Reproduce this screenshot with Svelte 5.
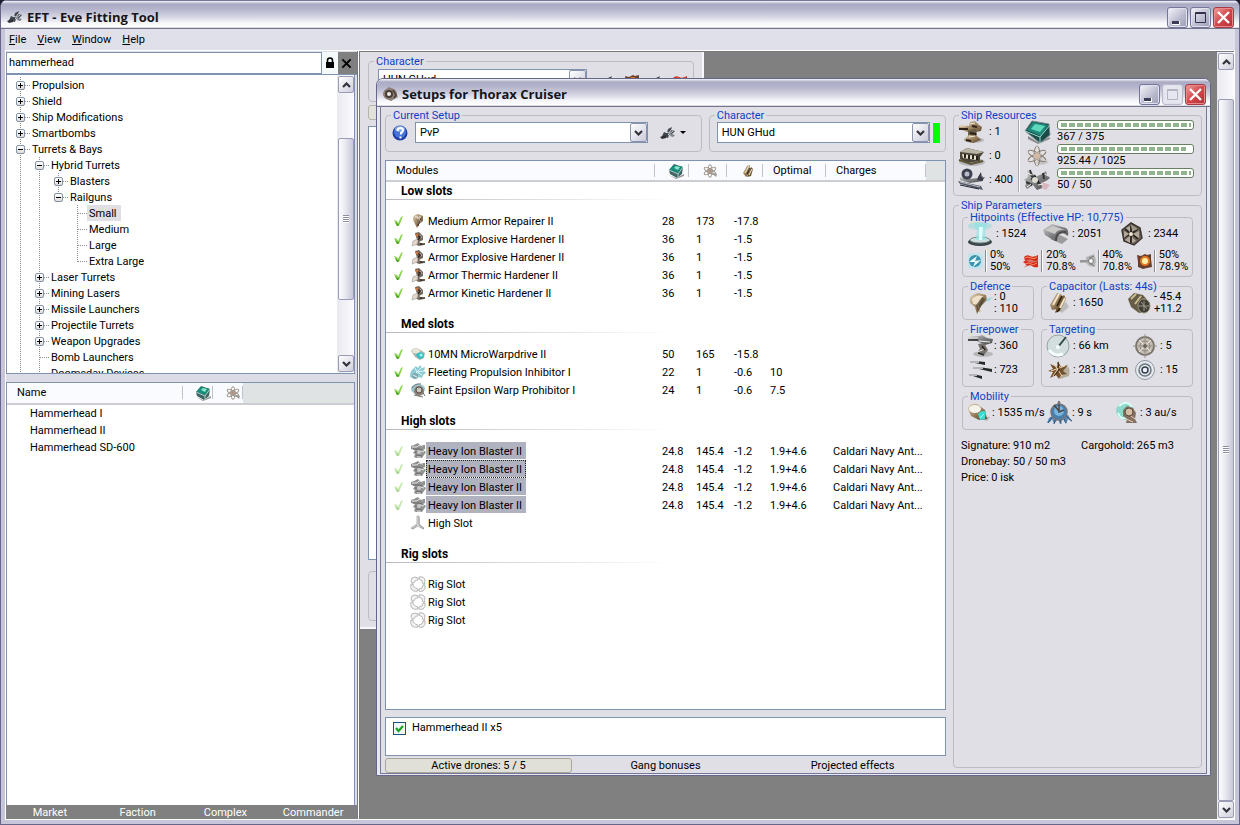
<script>
  const tree = [
    { t: 'Propulsion', b: '+', g: [] },
    { t: 'Shield', b: '+', g: [] },
    { t: 'Ship Modifications', b: '+', g: [] },
    { t: 'Smartbombs', b: '+', g: [] },
    { t: 'Turrets & Bays', b: '-', g: [] },
    { t: 'Hybrid Turrets', b: '-', g: [1] },
    { t: 'Blasters', b: '+', g: [1, 1] },
    { t: 'Railguns', b: '-', g: [1, 1], last: true },
    { t: 'Small', g: [1, 1, 0], sel: true },
    { t: 'Medium', g: [1, 1, 0] },
    { t: 'Large', g: [1, 1, 0] },
    { t: 'Extra Large', g: [1, 1, 0], last: true },
    { t: 'Laser Turrets', b: '+', g: [1] },
    { t: 'Mining Lasers', b: '+', g: [1] },
    { t: 'Missile Launchers', b: '+', g: [1] },
    { t: 'Projectile Turrets', b: '+', g: [1] },
    { t: 'Weapon Upgrades', b: '+', g: [1] },
    { t: 'Bomb Launchers', g: [1] },
    { t: 'Doomsday Devices', g: [1] }
  ];

  const groups = [
    {
      name: 'Low slots',
      rows: [
        { i: 'repair', n: 'Medium Armor Repairer II', v: ['28', '173', '-17.8', '', ''] },
        { i: 'hardener', n: 'Armor Explosive Hardener II', v: ['36', '1', '-1.5', '', ''] },
        { i: 'hardener', n: 'Armor Explosive Hardener II', v: ['36', '1', '-1.5', '', ''] },
        { i: 'hardener', n: 'Armor Thermic Hardener II', v: ['36', '1', '-1.5', '', ''] },
        { i: 'hardener', n: 'Armor Kinetic Hardener II', v: ['36', '1', '-1.5', '', ''] }
      ]
    },
    {
      name: 'Med slots',
      rows: [
        { i: 'mwd', n: '10MN MicroWarpdrive II', v: ['50', '165', '-15.8', '', ''] },
        { i: 'web', n: 'Fleeting Propulsion Inhibitor I', v: ['22', '1', '-0.6', '10', ''] },
        { i: 'scram', n: 'Faint Epsilon Warp Prohibitor I', v: ['24', '1', '-0.6', '7.5', ''] }
      ]
    },
    {
      name: 'High slots',
      rows: [
        ...[0, 1, 2, 3].map((k) => ({
          i: 'blaster',
          n: 'Heavy Ion Blaster II',
          v: ['24.8', '145.4', '-1.2', '1.9+4.6', 'Caldari Navy Ant...'],
          sel: true,
          focus: k === 1
        })),
        { i: 'high', n: 'High Slot', v: ['', '', '', '', ''], empty: true }
      ]
    },
    {
      name: 'Rig slots',
      rows: [0, 1, 2].map(() => ({ i: 'rig', n: 'Rig Slot', v: ['', '', '', '', ''], empty: true }))
    }
  ];

  const hardpoints = [
    ['turret', ': 1'],
    ['launcher', ': 0'],
    ['calib', ': 400']
  ];
  const resources = [
    ['cpu', '367 / 375', 100],
    ['atom', '925.44 / 1025', 96],
    ['drone', '50 / 50', 100]
  ];
  const resists = [
    ['em', '0%', '50%'],
    ['thermal', '20%', '70.8%'],
    ['kinetic', '40%', '70.8%'],
    ['explosive', '50%', '78.9%']
  ];

  let search = $state('hammerhead');
  let drones = $state(true);

  // Wide icons use a 28x24 canvas, list icons a 16x16 one.
  const big = {
    turret: '<ellipse cx="17" cy="20" rx="10" ry="3" fill="#777" opacity=".4"/><path d="M1 7l3-2 8 1 1-4 5-1 4 4 3 2-1 4-5 1-1 4-6 1-1-5-9-3z" fill="url(#bronze)"/><path d="M11 10l8-1 1 6-3 3-6-2z" fill="#6a5d48"/><path d="M7 19l5-4 8 1 4 4-8 3-8-2z" fill="url(#bronze)"/><path d="M2 9h9M15 6l5 1M13 13l6 1M9 20l5 1" stroke="#2b2116" stroke-width="2"/><path d="M13 4l5-1M3 6h6M12 17l6-1" stroke="#efe4cc"/>',
    launcher: '<ellipse cx="15" cy="18" rx="13" ry="4" fill="#777" opacity=".4"/><path d="M3 8l7-4 17 4-4 5v4l-13 2-7-4z" fill="#4c463a"/><path d="M3 8l7-4 17 4-7 2z" fill="#b9b5a4"/><path d="M5 10l15 2v4l-14-2z" fill="#e8e4d2"/><path d="M8 10v4M12 11v4M16 11v4M20 12v4" stroke="#272219" stroke-width="2"/><path d="M2 16l12 4 12-3" stroke="#5b5334" stroke-width="2" fill="none"/>',
    calib: '<path d="M1 13l23 5 2 4-23-6z" fill="#555865"/><path d="M3 9l8 2 11-1 4-2v5l-13 2-10-3z" fill="url(#steel)"/><circle cx="10" cy="6" r="4" fill="#b9bbc8" stroke="#3d4050" stroke-width="3"/><path d="M21 9l3-5 1 6 3-1-3 4-5-1z" fill="#3a3b49"/><path d="M3 14l20 5" stroke="#babdc9"/><path d="M3 17l19 4" stroke="#24252f"/>',
    cpu: '<path d="M5 16l10 6 12-5v2l-12 5-10-5z" fill="#555" opacity=".6"/><path d="M2 11L9 1l17 3 1 11-10 8z" fill="#184b49" stroke="#7b8a89"/><path d="M4 10l6-8 15 3-7 11z" fill="#1f8a7c"/><path d="M8 9l4-5 10 2-5 6z" fill="#5fd9bb"/><path d="M2 11l15 6 10-12M17 17v6" stroke="#9dd9cc" fill="none"/>',
    atom: '<path d="M12 19q8 4 14-1-5-2-7-5" fill="#999" opacity=".4"/><g fill="none" stroke="#8a7e72"><ellipse cx="14" cy="12" rx="3" ry="10"/><ellipse cx="14" cy="12" rx="3" ry="10" transform="rotate(60 14 12)"/><ellipse cx="14" cy="12" rx="3" ry="10" transform="rotate(120 14 12)"/></g><path d="M14 2v20M5 8l18 9M5 17l18-10" stroke="#eee5d8" stroke-width=".7"/><circle cx="14" cy="12" r="3" fill="#d3b8a2"/>',
    drone: '<path d="M11 17l12 5 4-5-8-3z" fill="#c88" opacity=".45"/><path d="M4 2l5 2 3 5 7-3 4-3 1 4 3 3-4 3-5 2 1 5-5 2-4-5-6 4-2-3 2-4-3-2 4-3z" fill="url(#steel)"/><path d="M7 2l2 7M12 7l-3 4 9 6M20 5l1 6M3 14l6 3" stroke="#333630" stroke-width="2"/><circle cx="12" cy="12" r="3" fill="#dedcd2"/><path d="M4 5l5 2M15 17l5-1M22 6l3 2M4 19l4-3" stroke="#f4f4ee"/>',
    shield: '<ellipse cx="14" cy="20" rx="12" ry="4" fill="#3b4649"/><ellipse cx="14" cy="18" rx="10" ry="3" fill="#cddfe0" stroke="#78888a"/><path d="M7 1h15l-3 6 1 11H10l1-11z" fill="#91e7e7" opacity=".65"/><ellipse cx="14" cy="4" rx="12" ry="4" fill="#8cdcdc" opacity=".5"/><path d="M13 5h4l-1 13h-3z" fill="#dcffff"/>',
    armor: '<path d="M8 17l12 5 6-5-8-4z" fill="#555" opacity=".5"/><path d="M1 8l9-6 14 4q3 2 2 8l-3-2q-3-2-7 0l-3 7L3 13z" fill="url(#steel)"/><path d="M3 8l8-4 12 4q-8-1-10 4z" fill="#c9cac8"/><path d="M14 19q0-10 10-9" stroke="#4a4b4b" stroke-width="2" fill="none"/>',
    hull: '<path d="M13 1l9 5 2 10-8 7-10-4-2-11z" fill="#6c6459" stroke="#3d362f" stroke-width="1.500"/><path d="M13 4v8l7-5M14 12l6 5M13 12v9M12 12l-6 4M13 12L7 7" stroke="#211c17" stroke-width="1.500"/><path d="M13 3l7 4-6 3zM6 9l5 3-5 4zM21 9v7l-6-4zM7 18l5-4v7zM14 15l4 4-4 2zM8 6l4-2v6z" fill="#c6bcae" opacity=".8"/><circle cx="13" cy="12" r="2" fill="#f1e7d5"/>',
    defence: '<path d="M4 12q-2-8 8-10l8 2 1 5-6 6-4 8-2-7z" fill="url(#bronze)"/><path d="M6 8q4-5 11-3l-5 9-5-1z" fill="#eee1c7"/><path d="M20 8l7-2-5 5z" fill="#9bd8dd"/><path d="M12 14l2 7" stroke="#c9b393" stroke-width="1.500"/><path d="M10 14l6-8 3 2-7 13z" fill="#3c3326" opacity=".6"/>',
    capacitor: '<path d="M9 17l8 5 7-6-3-5z" fill="#888" opacity=".4"/><path d="M5 14L12 2l5 2-5 14-5 1z" fill="url(#bronze)"/><path d="M14 8l5-4 2 4-6 12-5 2z" fill="#765d37"/><path d="M12 15l5-10M12 21l3-4" stroke="#2b2012" stroke-width="1.500"/><path d="M8 14l6-11M15 17l5-10" stroke="#f2e3c6" stroke-width="2"/>',
    recharge: '<path d="M2 8l6-6 9 2 7 8-3 8-8 2-8-6z" fill="#665d48"/><path d="M5 8l5-5M9 13l6-8M13 17l6-9" stroke="#c9bb92" stroke-width="2"/><ellipse cx="18" cy="15" rx="6" ry="7" fill="#3f3e34" stroke="#9c947e"/><path d="M18 10v10M13 15h10M15 11l6 7" stroke="#a09b8a"/>',
    firepower: '<ellipse cx="17" cy="20" rx="10" ry="3" fill="#777" opacity=".4"/><path d="M1 3l12-1 3-1 5 3 6 1-1 4-7 2-8-4-9-1z" fill="url(#steel)"/><path d="M12 10l6-1 4 7-4 5-7-3 3-3z" fill="#77716c"/><path d="M1 4h11M13 7l11 1M11 18l8-3" stroke="#eee"/><path d="M2 6h10M16 12l3 4M12 19l6 2" stroke="#262626" stroke-width="1.500"/>',
    volley: '<path d="M9 3l10 1v3L9 5zM13 9l13 2v3l-13-3zM7 16l9 2v3l-9-3z" fill="#222b29"/><path d="M4 4h9M7 10h10M3 17h8" stroke="#b4b6ba" stroke-width="2"/>',
    range: '<circle cx="13" cy="12" r="11" fill="#d2dddd" stroke="#93a5a4"/><path d="M4 16q5 7 14 4" stroke="#f7ffff" stroke-width="3" fill="none"/><path d="M13 13L21 3" stroke="#2f4945" stroke-width="2"/><circle cx="13" cy="13" r="2" fill="#f3ffff"/>',
    target: '<circle cx="13" cy="12" r="9" fill="#c5beb5" stroke="#7c756e" stroke-width="2"/><circle cx="13" cy="12" r="5" fill="none" stroke="#8a837c"/><path d="M13 0v24M1 12h24" stroke="#9a938b"/><path d="M7 6l12 12M19 6L7 18" stroke="#eee4d7"/><circle cx="13" cy="12" r="2" fill="#6a625a"/>',
    scan: '<path d="M16 10q11-5 8 8l-9 3z" fill="#b5ac9b"/><path d="M5 6l7 3 1-6 3 6 7-2-5 6 4 3-6 1-2 4-3-4-6 3 3-6-5-1 5-2z" fill="#76512e"/><path d="M6 13l14-5M9 6l8 12M8 18l7-10" stroke="#eed6ad"/><path d="M13 4l1 8-5 6" stroke="#3a2814" fill="none"/>',
    sig: '<circle cx="13" cy="12" r="9.500" fill="#e5e9ed" stroke="#8d97a1"/><circle cx="13" cy="12" r="6" fill="none" stroke="#6b7682" stroke-width="1.500"/><circle cx="13" cy="12" r="3" fill="#eef" stroke="#39424c" stroke-width="1.500"/>',
    speed: '<path d="M9 16l12 4 3-4z" fill="#888" opacity=".5"/><path d="M2 8q1-6 9-5l8 6 2 9-8 1-8-4z" fill="url(#bronze)"/><ellipse cx="9" cy="8" rx="6" ry="4" fill="#f4f3e9"/><path d="M12 13q4-5 8-2l-1 7-5 1z" fill="#38dcd0"/><path d="M14 17l4-4" stroke="#aff"/>',
    align: '<path d="M3 17L1 22l3-1 2-3 2 5 4-5 2 5 3-5 3 5 2-5 4 3-4-7-10-3z" fill="#5688b7"/><path d="M2 22l5-7M8 23l2-6M15 23l-1-6M20 22l-3-6M26 20l-7-6" stroke="#2f5576"/><circle cx="13" cy="11" r="8" fill="#477fae" stroke="#77757a" stroke-width="1.500"/><circle cx="13" cy="10" r="5" fill="#78b4dc"/><path d="M13 0v11l5-2M8 4l5 6" stroke="#4e433c" stroke-width="1.500" fill="none"/><circle cx="13" cy="2" r="1.500" fill="#777"/>',
    warp: '<circle cx="11" cy="10" r="9" fill="#8dd9cb"/><path d="M5 5q8-7 13 1M4 12q3 8 9 4" stroke="#ddfff6" stroke-width="2" fill="none"/><path d="M9 9l4-4 6 2 3 5-1 6 2 4H12l1-4-4-3z" fill="#857061"/><circle cx="15" cy="11" r="4" fill="#d7bca5" stroke="#604b3d"/><path d="M12 18l7 3M17 15l4 3" stroke="#e8cfb7"/>'
  };
  const small = {
    ship: '<path d="M1 13l3-6 3 1 1-4 4-2-1 3 4 1-3 3-3 1-1 3-4-1z" fill="#444950"/><path d="M5 7l4 1 2-3M8 10l5-4" stroke="#cdd2d5" fill="none"/><path d="M0 12l6-2v3l-4 1z" fill="#2d3135"/><path d="M11 9l4 1-2 2-3-1z" fill="#7c8386"/>',
    thorax: '<ellipse cx="8" cy="8" rx="7" ry="6" fill="#8a7c72"/><path d="M2 5l5-4 6 3 3 7-7 4-6-3z" fill="#8d8078"/><circle cx="7" cy="8" r="3" fill="#f2eee9" stroke="#4a3e38" stroke-width="2"/><path d="M11 4l3 5-2 3" stroke="#493e39" fill="none" stroke-width="1.500"/>',
    cpu: '<path d="M1 12l7 3 8-4v2l-8 3z" fill="#999"/><path d="M1 7l5-6 9 3-1 7-5 4-7-4z" fill="#3f6564"/><path d="M1 7l5-5 9 2-5 6z" fill="#178d7b"/><path d="M6 5l2-2 4 1-2 3z" fill="#8ae6cb"/><path d="M1 7l9 4 5-7M10 11v4" stroke="#b2ccc4" fill="none"/>',
    atom: '<g fill="none" stroke="#9c9389"><ellipse cx="8" cy="8" rx="2" ry="6.500"/><ellipse cx="8" cy="8" rx="2" ry="6.500" transform="rotate(60 8 8)"/><ellipse cx="8" cy="8" rx="2" ry="6.500" transform="rotate(120 8 8)"/></g><path d="M9 9l5 5 1-3z" fill="#999"/><circle cx="8" cy="8" r="2" fill="#b09683"/>',
    cap: '<path d="M3 10l4-7 3-1-1 8-3 4z" fill="url(#bronze)"/><path d="M8 11l3-7 2 2-2 7-4 1z" fill="#6d5733"/><path d="M5 10l4-7M9 12l3-6" stroke="#fff1cf"/><path d="M7 11l3-6" stroke="#2c2010"/>',
    repair: '<path d="M3 7q-1-5 5-6l5 2v5l-4 3-2 4-2-4z" fill="url(#bronze)"/><path d="M5 4h3v7M10 3v6" stroke="#f8eee0" fill="none"/><path d="M8 6v7l3-8" stroke="#4c3a2a" fill="none"/>',
    hardener: '<path d="M5 2l4-1 4 4v4l-4 2 5 3-5 1-5-2 3-4z" fill="#75695f"/><path d="M3 10l5-2-1 5-5 2zM10 4l2 3" fill="#e8d7c5" stroke="#bbb"/><path d="M6 3l4 3-2 3M10 13h5" stroke="#38281e" fill="none" stroke-width="1.500"/><circle cx="7" cy="4" r="1.500" fill="#c47b48"/>',
    mwd: '<path d="M1 5q2-4 8-2l6 4-1 5-4 2-5-3z" fill="#aab5b0"/><ellipse cx="6" cy="5" rx="4" ry="2.500" fill="#e9e6d5"/><path d="M6 9q3-5 8-1l-1 4-4 1z" fill="#32bfc0"/><circle cx="11" cy="9" r="1.500" fill="#aaf9f3"/>',
    web: '<path d="M0 13q0-6 3-8l3-3 2 2 2-3 2 3 3-1-1 4 2 2-3 2-1 3-4-1-3 2z" fill="#8fcbd4"/><path d="M3 12l4-4 5-5M7 8l7-1M7 8l5 3M7 8L5 4" stroke="#d5f6fa" fill="none"/><circle cx="5" cy="12" r="3" fill="#7fa6ae"/><path d="M3 11l4 2" stroke="#e5f6f7"/>',
    scram: '<ellipse cx="8" cy="7" rx="7" ry="5" fill="#9cc4cc"/><circle cx="9" cy="9" r="5" fill="#8f7f72"/><circle cx="9" cy="8" r="3" fill="#cbc6ba" stroke="#56504a"/><path d="M4 13l9 2M12 9l3 5M2 6q3-5 9-4" stroke="#6b7677" fill="none"/>',
    blaster: '<path d="M4 2l4-2 2 2h5v4l-2 1 3 2-2 3-2 3H6l-2-1 1-3-2-1 2-3-4-1V3z" fill="#777"/><path d="M2 4h5l2-2 4 1M7 14h4M10 8l4 1" stroke="#ddd" fill="none"/><path d="M3 6h6l3 1M6 12l6 1M5 9h3" stroke="#444" fill="none"/><circle cx="9" cy="9" r="2" fill="#bcbcbc"/>',
    high: '<path d="M7 1h2v8l5 4-1 1-5-3-5 3-2-1 6-4z" fill="#e4e4e4" stroke="#a2a2a2" stroke-width=".8"/><path d="M9 2v8l5 4M7 10l-5 4" stroke="#8a8a8a" fill="none" stroke-width=".7"/>',
    rig: '<g fill="#f2f2f2" stroke="#a6a6a6" stroke-width=".8"><path d="M2 2q3-2 6 0v2Q5 3 4 7H2Q0 4 2 2z"/><path d="M9 1q5-1 6 3-1 3 0 4h-2q0-4-4-5z"/><path d="M13 9h2q1 4-2 6-3 1-4 0v-2q4 0 4-4z"/><path d="M1 8h2q0 4 5 5v2q-4 1-6-1-2-2-1-6z"/></g>',
    em: '<rect width="15" height="16" rx="4" x="1" fill="#c1e3eb"/><circle cx="8" cy="8" r="6" fill="#3c94ad"/><path d="M2 9l8-6-2 5 6-1-8 7 2-5z" fill="#effdff"/>',
    thermal: '<path d="M1 4q3-3 6-1t8-1v5q-3 2-6 0t-6 1zM0 9q3-2 6 0t9-1v6q-4 1-6-1t-9 2l4-3z" fill="#d32c1c"/><path d="M1 5h14v7H3z" fill="#d32c1c" opacity=".6"/><path d="M2 5q3-2 6 0t6-1M2 11q4-2 6 0t6-1" stroke="#ff8b6c" fill="none"/>',
    kinetic: '<path d="M0 7h6V4l8-3 2 6-1 7-6-1-3-3H0z" fill="#b6b6b6"/><path d="M0 8h8M9 5l5-2M9 10l5 3" stroke="#777"/><circle cx="11" cy="8" r="2.500" fill="#f4f4f4" stroke="#777"/>',
    explosive: '<path d="M1 2l4 1 4-2 2 1 4-1v5l1 8-5 1-4 1-5-2V9z" fill="#68402e"/><circle cx="9" cy="8" r="5" fill="#e87620"/><circle cx="9" cy="8" r="3" fill="#fff1ad"/>',
    check: '<path d="M3 7l3 1 1 2 3-6 2-1-4 10H6z" fill="#8ad44f"/><path d="M4 9l3 2 1 0 2-3-3 5H6z" fill="#4ba321"/>',
    help: '<circle cx="8" cy="8" r="7.500" fill="#1d3fa5"/><circle cx="8" cy="7" r="6" fill="#4774d8"/><ellipse cx="8" cy="4" rx="5" ry="3" fill="#88aaf0"/><path d="M5.500 6q0-3 3-3 2.500 0 2.500 2.500 0 1.500-2 2.500v1.500M8.500 11.500v2" stroke="#fff" stroke-width="2" fill="none"/>'
  };
</script>

{#snippet ico(name)}
  <svg class="ico" viewBox="0 0 16 16" aria-hidden="true">{@html small[name]}</svg>
{/snippet}

{#snippet pic(name)}
  <svg class="pic" viewBox="0 0 28 24" aria-hidden="true">{@html big[name]}</svg>
{/snippet}

{#snippet stat(name, text)}
  <span class="stat">{@render pic(name)}<span>{text}</span></span>
{/snippet}

{#snippet chevron(up)}
  <svg class="chev" viewBox="0 0 9 6" aria-hidden="true"><path d={up ? 'M1 5l3.500-3.500L8 5' : 'M1 1l3.500 3.500L8 1'} fill="none" stroke="#33343c" stroke-width="2.200" /></svg>
{/snippet}

{#snippet caption(inactive)}
  <div class="caption">
    <button aria-label="Minimize"><svg viewBox="0 0 19 19"><path d="M4 13h8v4H4z" fill="#fff" /><path d="M4 13h7v3H4z" fill="#3b3c55" /></svg></button>
    <button aria-label="Maximize" class:inactive disabled={inactive}><svg viewBox="0 0 19 19"><path d="M4.500 4.500h10v10h-10zM4 5.500h11" fill="none" stroke={inactive ? '#b5b5c1' : '#30314c'} stroke-width="1" /></svg></button>
    <button aria-label="Close" class="close"><svg viewBox="0 0 19 19"><path d="M4 4l11 11M15 4L4 15" stroke="#fff" stroke-width="2.400" /></svg></button>
  </div>
{/snippet}

{#snippet scrollbar(kind)}
  <div class="scrollbar {kind}">
    <button aria-label="Scroll up">{@render chevron(true)}</button>
    <div class="track"><div class="thumb"><i></i></div></div>
    <button aria-label="Scroll down">{@render chevron(false)}</button>
  </div>
{/snippet}

<svg class="defs" aria-hidden="true">
  <defs>
    <linearGradient id="steel" x1="0" y1="0" x2="1" y2="1"><stop offset="0" stop-color="#d6d6d6" /><stop offset=".5" stop-color="#818283" /><stop offset="1" stop-color="#444547" /></linearGradient>
    <linearGradient id="bronze" x1="0" y1="0" x2="1" y2="1"><stop offset="0" stop-color="#e5d8bf" /><stop offset=".5" stop-color="#9a815f" /><stop offset="1" stop-color="#4b3a26" /></linearGradient>
  </defs>
</svg>

<div class="app">
  <header class="titlebar">
    {@render ico('ship')}
    <h1>EFT - Eve Fitting Tool</h1>
    {@render caption(false)}
  </header>
  <nav class="menu">
    <button><u>F</u>ile</button>
    <button><u>V</u>iew</button>
    <button><u>W</u>indow</button>
    <button><u>H</u>elp</button>
  </nav>

  <div class="work">
    <aside>
      <div class="search">
        <input aria-label="Search items" bind:value={search} />
        <button class="lock" aria-label="Lock search"><svg viewBox="0 0 10 12"><path d="M2.500 6V3.500a2.500 2.500 0 015 0V6" fill="none" stroke="#000" stroke-width="1.600" /><rect x="1" y="5" width="8" height="6" fill="#000" /></svg></button>
        <button class="clear" aria-label="Clear search"><svg viewBox="0 0 12 12"><path d="M1.500 1.500l9 9M10.500 1.500l-9 9" stroke="#000" stroke-width="2.200" /></svg></button>
      </div>

      <div class="tree">
        <ul>
          {#each tree as r}
            <li>
              {#each r.g as line}<i class="cell" class:line></i>{/each}
              <i class="cell line branch" class:last={r.last}>
                {#if r.b}<b class="box"><svg viewBox="0 0 9 9"><path d={r.b === '+' ? 'M2 4.500h5M4.500 2v5' : 'M2 4.500h5'} stroke="#000" /></svg></b>{/if}
              </i>
              <button class:sel={r.sel}>{r.t}</button>
            </li>
          {/each}
        </ul>
        {@render scrollbar('market')}
      </div>

      <div class="items">
        <table>
          <colgroup><col class="i-name" /><col class="i-cpu" /><col class="i-grid" /><col /></colgroup>
          <thead>
            <tr><th>Name</th><th aria-label="CPU">{@render ico('cpu')}</th><th aria-label="Powergrid">{@render ico('atom')}</th><th class="rest"></th></tr>
          </thead>
          <tbody>
            {#each ['Hammerhead I', 'Hammerhead II', 'Hammerhead SD-600'] as n}
              <tr><td>{n}</td><td></td><td></td><td></td></tr>
            {/each}
          </tbody>
        </table>
      </div>
      <div class="side-tabs">
        <button>Market</button><button>Faction</button><button>Complex</button><button>Commander</button>
      </div>
    </aside>

    <div class="mdi">
      <main>
        <div class="back">
          <fieldset>
            <legend>Character</legend>
            <div class="back-row"><div class="combo"><select aria-label="Character"><option>HUN GHud</option></select><span>{@render chevron(false)}</span></div>{@render ico('ship')}{@render ico('explosive')}{@render ico('ship')}{@render ico('thermal')}</div>
          </fieldset>
          <div class="back-tab"></div>
          <div class="back-list"></div>
          <div class="back-foot"></div>
        </div>

        <section class="win">
          <header class="titlebar">
            {@render ico('thorax')}
            <h2>Setups for Thorax Cruiser</h2>
            {@render caption(true)}
          </header>
          <div class="body">
            <div class="left">
              <div class="pickers">
                <fieldset>
                  <legend>Current Setup</legend>
                  <div class="pick">
                    <button class="flat" aria-label="Help">{@render ico('help')}</button>
                    <div class="combo"><select aria-label="Current Setup"><option>PvP</option></select><span>{@render chevron(false)}</span></div>
                    <button class="flat ships" aria-label="Setup actions">{@render ico('ship')}<svg class="drop" viewBox="0 0 6 3"><path d="M0 0h6L3 3z" /></svg></button>
                  </div>
                </fieldset>
                <fieldset>
                  <legend>Character</legend>
                  <div class="pick who">
                    <div class="combo"><select aria-label="Character"><option>HUN GHud</option></select><span>{@render chevron(false)}</span></div>
                    <i class="online"></i>
                  </div>
                </fieldset>
              </div>

              <div class="modules">
                <table>
                  <colgroup><col class="c1" /><col class="c2" /><col class="c3" /><col class="c4" /><col class="c5" /><col class="c6" /><col /></colgroup>
                  <thead>
                    <tr>
                      <th>Modules</th><th aria-label="CPU">{@render ico('cpu')}</th><th aria-label="Powergrid">{@render ico('atom')}</th><th aria-label="Capacitor">{@render ico('cap')}</th><th>Optimal</th><th>Charges</th><th class="rest"></th>
                    </tr>
                  </thead>
                  {#each groups as g}
                    <tbody>
                      <tr class="group"><th colspan="7"><span>{g.name}</span></th></tr>
                      {#each g.rows as r}
                        <tr>
                          <td>
                            <div class="mod" class:dim={r.sel}>
                              <span class="tick">{#if !r.empty}{@render ico('check')}{/if}</span>
                              {@render ico(r.i)}
                              <span class="name" class:sel={r.sel} class:focus={r.focus}>{r.n}</span>
                            </div>
                          </td>
                          {#each r.v as v}<td>{v}</td>{/each}
                          <td></td>
                        </tr>
                      {/each}
                    </tbody>
                  {/each}
                </table>
              </div>

              <div class="drones">
                <label><input type="checkbox" bind:checked={drones} />Hammerhead II x5</label>
              </div>
              <div class="tabs">
                <button class="on">Active drones: 5 / 5</button><button>Gang bonuses</button><button>Projected effects</button>
              </div>
            </div>

            <div class="right">
              <fieldset>
                <legend>Ship Resources</legend>
                <div class="res">
                  <div class="points">
                    {#each hardpoints as [i, t]}<span>{@render pic(i)}{t}</span>{/each}
                  </div>
                  <div class="usage">
                    {#each resources as [i, t, p]}
                      <div class="use">
                        {@render pic(i)}
                        <div><div class="bar" role="progressbar" aria-label={t} aria-valuenow={p}><i style="width:{p}%"></i></div><span>{t}</span></div>
                      </div>
                    {/each}
                  </div>
                </div>
              </fieldset>
              <fieldset class="params">
                <legend>Ship Parameters</legend>
                <div class="stack">
                  <fieldset>
                    <legend>Hitpoints (Effective HP: 10,775)</legend>
                    <div class="in hp">
                      <div class="three">{@render stat('shield', ': 1524')}{@render stat('armor', ': 2051')}{@render stat('hull', ': 2344')}</div>
                      <div class="four">
                        {#each resists as [i, a, b]}<span class="resist">{@render ico(i)}<i></i><span>{a}<br />{b}</span></span>{/each}
                      </div>
                    </div>
                  </fieldset>
                  <div class="pair">
                    <fieldset>
                      <legend>Defence</legend>
                      <div class="in"><span class="stat">{@render pic('defence')}<span class="two">: 0<br />: 110</span></span></div>
                    </fieldset>
                    <fieldset>
                      <legend>Capacitor (Lasts: 44s)</legend>
                      <div class="in duo cap">{@render stat('capacitor', ': 1650')}<span class="stat">{@render pic('recharge')}<span class="two">- 45.4<br />+11.2</span></span></div>
                    </fieldset>
                  </div>
                  <div class="pair">
                    <fieldset>
                      <legend>Firepower</legend>
                      <div class="in">{@render stat('firepower', ': 360')}{@render stat('volley', ': 723')}</div>
                    </fieldset>
                    <fieldset>
                      <legend>Targeting</legend>
                      <div class="in duo">{@render stat('range', ': 66 km')}{@render stat('target', ': 5')}{@render stat('scan', ': 281.3 mm')}{@render stat('sig', ': 15')}</div>
                    </fieldset>
                  </div>
                  <fieldset>
                    <legend>Mobility</legend>
                    <div class="in move">{@render stat('speed', ': 1535 m/s')}{@render stat('align', ': 9 s')}{@render stat('warp', ': 3 au/s')}</div>
                  </fieldset>
                  <div class="notes">
                    <span>Signature: 910 m2</span><span>Cargohold: 265 m3</span>
                    <span>Dronebay: 50 / 50 m3</span><span></span>
                    <span>Price: 0 isk</span>
                  </div>
                </div>
              </fieldset>
            </div>
          </div>
        </section>
      </main>
      {@render scrollbar('outer')}
    </div>
  </div>
</div>

<style>
  :global(body) { margin: 0; background: #1c1c2c; }
  .app, .app * { box-sizing: border-box; }
  .app {
    --line: #7f93b0;
    --face: #e0dfe5;
    height: 100vh;
    display: flex;
    flex-direction: column;
    overflow: hidden;
    padding: 0 4px 4px;
    border: 1px solid #66668a;
    border-top: 0;
    border-radius: 7px 7px 0 0;
    background: #c6c6d8;
    font: 11px/14px Roboto, "Liberation Sans", Arial, sans-serif;
    color: #000;
  }
  button, input, select { font: inherit; color: inherit; padding: 0; margin: 0; border: 0; background: none; border-radius: 0; }
  i { font-style: normal; }
  h1, h2 { margin: 0; font: bold 13px/18px "Open Sans", "Noto Sans", sans-serif; flex: 1; color: #15151c; }
  .defs { position: absolute; width: 0; height: 0; }
  .ico { width: 16px; height: 16px; flex: none; display: block; }
  .pic { width: 28px; height: 24px; flex: none; display: block; }
  .chev { width: 9px; height: 6px; display: block; }

  .titlebar {
    flex: none;
    height: 29px;
    margin: 0 -4px;
    padding: 5px 5px 0 6px;
    display: flex;
    align-items: center;
    gap: 4px;
    border-top: 1px solid #77779a;
    border-bottom: 1px solid #74748c;
    background: linear-gradient(#f4f4fa, #aaaac4 3px, #b4b4cc 8px, #d6d6e3 16px, #f6f6fb 22px, #fff 26px, #b6b6c6);
  }
  .caption { display: flex; gap: 2px; }
  .caption button { width: 21px; height: 21px; border: 1px solid #74769a; border-radius: 3px; background: linear-gradient(135deg, #f4f4fa, #babace 60%, #9c9db8); box-shadow: inset 0 0 0 1px #e2e2ee; }
  .caption svg { width: 19px; height: 19px; display: block; }
  .caption .inactive { background: #e6e6ee; border-color: #b9b9ca; }
  .caption .close { border-color: #a83a44; background: linear-gradient(135deg, #eba39d, #d3474b 50%, #b32d36); box-shadow: inset 0 0 0 1px #e9888a; }

  .menu { flex: none; height: 21px; padding: 0 4px; display: flex; gap: 11px; background: #dfe0ea; }
  .work { flex: 1; min-height: 0; display: flex; border: 1px solid #fff; }

  aside { width: 352px; flex: none; display: flex; flex-direction: column; padding-top: 1px; border-right: 1px solid #77778c; background: #dcdce6; }
  .search { height: 23px; flex: none; display: flex; background: #808080; border-bottom: 1px solid var(--line); }
  .search input { flex: 1; min-width: 0; padding: 0 2px; background: #fff; border: 1px solid var(--line); outline: 0; }
  .search button { display: grid; place-items: center; }
  .lock { width: 16px; background: #f4fafa; }
  .lock svg { width: 10px; height: 12px; }
  .clear { width: 19px; padding-right: 2px; }
  .clear svg { width: 11px; height: 11px; }

  .tree { height: 299px; flex: none; display: flex; background: #fff; border: 1px solid var(--line); border-top: 0; margin-right: 2px; overflow: hidden; }
  .tree ul { flex: 1; margin: 0; padding: 2px 0 0 4px; list-style: none; }
  .tree li { height: 16px; display: flex; }
  .cell { width: 19px; flex: none; position: relative; }
  .line { background: repeating-linear-gradient(#8c8c8c 0 1px, transparent 1px 2px) 9px 0 / 1px 100% no-repeat; }
  .last { background-size: 1px 9px; }
  .branch::after { content: ""; position: absolute; left: 10px; right: 0; top: 8px; height: 1px; background: repeating-linear-gradient(90deg, #8c8c8c 0 1px, transparent 1px 2px); }
  .box { position: absolute; z-index: 1; left: 5px; top: 4px; width: 9px; height: 9px; border: 1px solid #8593a8; border-radius: 2px; background: linear-gradient(#fff, #dcdcd8); }
  .box svg { display: block; width: 9px; height: 9px; margin: -1px; }
  .tree li button { padding: 1px 2px 0; line-height: 15px; white-space: nowrap; }
  .tree .sel { background: #dfdfe4; padding-right: 4px; }

  .scrollbar { width: 17px; flex: none; display: flex; flex-direction: column; padding: 1px 0 1px 1px; background: linear-gradient(90deg, #e9e9f0, #fbfbfd); }
  .scrollbar button { height: 17px; flex: none; display: grid; place-items: center; border: 1px solid #9a9bb4; border-radius: 2px; background: linear-gradient(135deg, #fff, #cfcfdd); }
  .track { flex: 1; min-height: 0; }
  .thumb { border: 1px solid #9a9bb4; border-radius: 2px; background: linear-gradient(90deg, #fcfcff, #e6e6f0 50%, #c6c7d8); display: grid; place-items: center; position: relative; }
  .thumb i { width: 6px; height: 8px; background: repeating-linear-gradient(#8c8ca2 0 1px, #fff 1px 2px); }
  .market .thumb { top: 17%; height: 62%; }
  .outer .thumb { top: 4%; height: 96%; }

  .items { flex: 1; min-height: 0; margin: 8px 2px 0 0; background: #fff; border: 1px solid var(--line); border-bottom: 0; }
  table { width: 100%; table-layout: fixed; border-collapse: collapse; }
  th, td { padding: 0; text-align: left; font-weight: normal; white-space: nowrap; overflow: hidden; }
  thead th { height: 21px; padding-left: 10px; border-bottom: 2px solid #cdcdd3; background: linear-gradient(90deg, #c0c3cc, #c0c3cc) 100% 3px / 1px 13px no-repeat #fafbfe; }
  thead th .ico { margin-left: 3px; }
  thead .rest { background: #dfe3e3; }
  .i-name { width: 176px; }
  .i-cpu { width: 30px; }
  .i-grid { width: 30px; }
  .items thead th + th { padding-left: 9px; }
  .items td { height: 17px; padding: 2px 0 0 23px; overflow: visible; }
  .side-tabs { height: 14px; flex: none; display: grid; grid-template-columns: repeat(4, 1fr); background: #808080; color: #fff; line-height: 13px; }

  .mdi { flex: 1; min-width: 0; display: flex; margin-left: 1px; border: 1px solid #77777c; border-width: 1px 0 0 1px; background: #808080; box-shadow: -1px 0 #fff; }
  main { flex: 1; position: relative; overflow: hidden; }

  fieldset { min-width: 0; margin: 0; padding: 0; border: 1px solid #bdbcc2; border-radius: 4px; }
  legend { margin-left: 5px; padding: 0 2px; height: 14px; line-height: 16px; color: #0f3fc4; white-space: nowrap; }

  .back { position: absolute; left: 0; top: 0; width: 344px; bottom: 190px; padding: 2px 8px 6px 8px; display: flex; flex-direction: column; background: var(--face); border-right: 2px solid #f8f8fc; border-bottom: 2px solid #f8f8fc; }
  .back > fieldset { height: 48px; flex: none; }
  .back-row { display: flex; align-items: flex-end; gap: 8px; padding: 1px 0 0 9px; }
  .back-row .combo { flex: none; width: 209px; margin-right: 5px; }
  .back-tab { height: 15px; flex: none; margin-top: 3px; border: 1px solid #b5b4a8; border-radius: 3px; background: #e2e1da; }
  .back-list { flex: 1; margin-top: 6px; border: 1px solid var(--line); background: #fff; }
  .back-foot { height: 50px; flex: none; margin-top: 11px; border: 1px solid #bdbcc2; border-radius: 4px; }

  .win { position: absolute; left: 16px; right: 6px; top: 26px; bottom: 43px; display: flex; flex-direction: column; padding: 0 3px 1px; border: 1px solid #66668a; border-radius: 7px 7px 0 0; background: #e9e9f1; overflow: hidden; }
  .win .titlebar { height: 28px; margin: 0 -3px; padding: 3px 4px 0 5px; border-top: 0; }
  .body { flex: 1; min-height: 0; display: flex; gap: 7px; padding: 1px 4px 0; border: 1px solid #77779a; border-top: 0; background: var(--face); }
  .left { flex: 1; min-width: 0; display: flex; flex-direction: column; }
  .pickers { display: flex; gap: 7px; }
  .pickers fieldset:first-child { flex: 317; }
  .pickers fieldset:last-child { flex: 237; }
  .pick { display: flex; align-items: center; gap: 7px; padding: 0 8px 8px 6px; }
  .flat { display: flex; align-items: center; }
  .ships { gap: 4px; margin: 0 7px 0 5px; }
  .drop { width: 6px; height: 3px; }
  .who { gap: 3px; padding: 0 5px 8px 7px; }
  .online { width: 7px; height: 20px; background: #0f0; }
  .combo { flex: 1; height: 21px; display: grid; background: #fff; border: 1px solid var(--line); }
  .combo select { grid-area: 1 / 1; appearance: none; padding-left: 4px; outline: 0; }
  .combo span { grid-area: 1 / 1; justify-self: end; width: 17px; display: grid; place-items: center; pointer-events: none; border: 1px solid #8c93ad; border-radius: 2px; background: linear-gradient(135deg, #fff, #c9c9da); }

  .modules { flex: 1; min-height: 0; margin-top: 8px; background: #fff; border: 1px solid var(--line); }
  .c1 { width: 269px; }
  .c2 { width: 34px; }
  .c3 { width: 38px; }
  .c4 { width: 36px; }
  .c5 { width: 63px; }
  .c6 { width: 100px; }
  .modules thead th { height: 20px; }
  .modules td { height: 18px; padding: 2px 0 0 7px; }
  .modules td:first-child { padding: 0; }
  .group th { height: 43px; padding-top: 14px; vertical-align: top; }
  tbody:nth-child(3) .group th { height: 31px; padding-top: 1px; }
  .group span { display: block; width: 286px; height: 17px; padding-left: 15px; font-weight: bold; font-size: 12px; line-height: 17px; background: linear-gradient(90deg, #b9b9c2, #fff) 0 100% / 100% 1px no-repeat; }
  .mod { display: flex; align-items: center; padding-left: 5px; height: 18px; }
  .tick { width: 19px; }
  .name { height: 18px; padding: 0 2px; line-height: 20px; border-bottom: 1px solid transparent; background-clip: padding-box; }
  .name.sel { background-color: #b1b2c0; padding-right: 4px; }
  .name.focus { outline: 1px dotted #222; outline-offset: -1px; }
  .dim .ico { opacity: .8; }
  .dim .tick { opacity: .6; }

  .drones { height: 39px; flex: none; margin-top: 7px; padding: 3px 7px; background: #fff; border: 1px solid var(--line); }
  .drones label { display: flex; align-items: center; gap: 6px; }
  .drones input { appearance: none; width: 13px; height: 13px; border: 1px solid #1c5180; background: #f4f6f2; }
  .drones input:checked { background: url("data:image/svg+xml,%3Csvg xmlns='http://www.w3.org/2000/svg' viewBox='0 0 11 11'%3E%3Cpath d='M2 5l2.500 3L9 3' fill='none' stroke='%2321a121' stroke-width='2.200'/%3E%3C/svg%3E") #f4f6f2; }
  .tabs { flex: none; display: grid; grid-template-columns: repeat(3, 1fr); margin: 2px 0 0; height: 15px; }
  .tabs button { line-height: 13px; border: 1px solid transparent; }
  .tabs .on { border-color: #a9a89c; border-radius: 3px; background: #e1e0d8; }

  .right { width: 249px; flex: none; display: flex; flex-direction: column; gap: 2px; padding-bottom: 5px; }
  .res { display: flex; margin-top: -2px; padding: 0 7px 3px 3px; }
  .points { width: 62px; flex: none; display: flex; flex-direction: column; border-right: 1px solid #a9a9ae; box-shadow: 1px 0 #fff; }
  .points span { display: flex; height: 24px; line-height: 24px; gap: 4px; white-space: nowrap; }
  .usage { flex: 1; padding-left: 4px; }
  .use { display: flex; gap: 6px; height: 24px; }
  .use > div { flex: 1; line-height: 14px; }
  .bar { height: 10px; padding: 1px 2px; border: 1px solid #64805f; border-radius: 3px; background: #fff; }
  .bar i { display: block; height: 6px; border: 1px solid transparent; border-width: 1px 0; background: repeating-linear-gradient(90deg, #fff 0 1px, #8fb58c 1px 7px, #fff 7px 8px) padding-box; }
  .params { flex: 1; }
  .stack { display: flex; flex-direction: column; gap: 2px; margin-top: -2px; padding: 0 8px; }
  .pair { display: grid; grid-template-columns: 72px 1fr; gap: 7px; }
  .in { margin-top: -2px; padding: 0 2px 4px 3px; }
  .stat { display: flex; align-items: center; height: 24px; white-space: nowrap; }
  .two { line-height: 12px; }
  .hp { padding-bottom: 2px; }
  .three { display: grid; grid-template-columns: 76px 76px 1fr; }
  .hp .stat { gap: 2px; }
  .four { display: grid; grid-template-columns: repeat(4, 1fr); margin: 2px -2px 0 1px; }
  .resist { display: flex; align-items: center; height: 26px; line-height: 12px; white-space: nowrap; }
  .resist i { width: 2px; height: 22px; margin: 0 3px 0 2px; border: 1px solid #8b8b8b; border-right-color: #fff; border-width: 0 1px; }
  .duo { display: grid; grid-template-columns: 87px 1fr; }
  .cap { grid-template-columns: 81px 1fr; }
  .move { display: grid; grid-template-columns: 80px 68px 1fr; }
  .move .stat .pic { margin-right: -2px; }
  .notes { display: grid; grid-template-columns: 120px 1fr; line-height: 16px; margin: 6px -1px 0; white-space: nowrap; }
</style>
